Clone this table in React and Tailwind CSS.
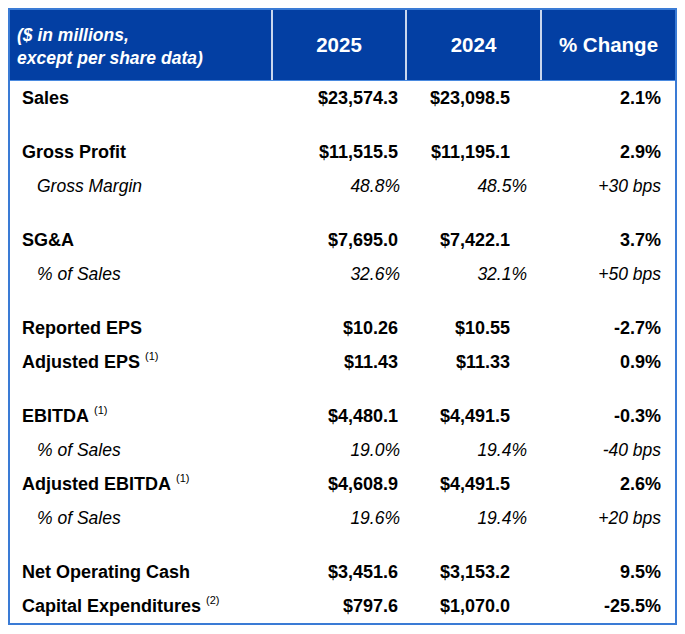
const rows = [
  { label: "Sales", a: "$23,574.3", b: "$23,098.5", c: "2.1%" },
  { spacer: true },
  { label: "Gross Profit", a: "$11,515.5", b: "$11,195.1", c: "2.9%" },
  { label: "Gross Margin", a: "48.8%", b: "48.5%", c: "+30 bps", sub: true },
  { spacer: true },
  { label: "SG&A", a: "$7,695.0", b: "$7,422.1", c: "3.7%" },
  { label: "% of Sales", a: "32.6%", b: "32.1%", c: "+50 bps", sub: true },
  { spacer: true },
  { label: "Reported EPS", a: "$10.26", b: "$10.55", c: "-2.7%" },
  { label: "Adjusted EPS", note: "(1)", a: "$11.43", b: "$11.33", c: "0.9%" },
  { spacer: true },
  { label: "EBITDA", note: "(1)", a: "$4,480.1", b: "$4,491.5", c: "-0.3%" },
  { label: "% of Sales", a: "19.0%", b: "19.4%", c: "-40 bps", sub: true },
  { label: "Adjusted EBITDA", note: "(1)", a: "$4,608.9", b: "$4,491.5", c: "2.6%" },
  { label: "% of Sales", a: "19.6%", b: "19.4%", c: "+20 bps", sub: true },
  { spacer: true },
  { label: "Net Operating Cash", a: "$3,451.6", b: "$3,153.2", c: "9.5%" },
  { label: "Capital Expenditures", note: "(2)", a: "$797.6", b: "$1,070.0", c: "-25.5%" },
];

const Row = ({ r }) => {
  if (r.spacer) return <div className="col-span-4 h-[20px]" />;
  const text = r.sub
    ? "italic font-normal text-[17.5px]"
    : "font-bold text-[18px]";
  return (
    <>
      <div className={`h-[34px] flex items-center ${r.sub ? "pl-[27px]" : "pl-[12px]"} ${text}`}>
        {r.label}
        {r.note && (
          <span className="not-italic font-normal text-[11px] relative -top-[6px] ml-[5px]">
            {r.note}
          </span>
        )}
      </div>
      <div className={`h-[34px] flex items-center justify-end ${r.sub ? "pr-[5px]" : "pr-[7px]"} ${text}`}>
        {r.a}
      </div>
      <div className={`h-[34px] flex items-center justify-end ${r.sub ? "pr-[13px]" : "pr-[30px]"} ${text}`}>
        {r.b}
      </div>
      <div className={`h-[34px] flex items-center justify-end pr-[14px] ${text}`}>
        {r.c}
      </div>
    </>
  );
};

export default function App() {
  return (
    <div className="bg-white w-[685px] h-[634px] pt-[8px] pl-[8px] font-['Liberation_Sans',Arial,sans-serif] text-black">
      <div className="w-[669px] border-2 border-[#3a7bd5]">
        <div className="grid grid-cols-[261px_134px_135px_135px] h-[71px] bg-[#033fa3] text-white border-b border-[#4a8ae0]">
          <div className="flex flex-col justify-center pl-[7px] pt-[4px] italic font-bold text-[17.5px] leading-[23px]">
            <span>($ in millions,</span>
            <span>except per share data)</span>
          </div>
          <div className="flex items-center justify-center border-l-2 border-[#c9d6ee] font-bold text-[20.5px]">
            2025
          </div>
          <div className="flex items-center justify-center border-l-2 border-[#c9d6ee] font-bold text-[20.5px]">
            2024
          </div>
          <div className="flex items-center justify-center border-l-2 border-[#c9d6ee] font-bold text-[20.5px]">
            % Change
          </div>
        </div>
        <div className="grid grid-cols-[261px_134px_135px_135px]">
          {rows.map((r, i) => (
            <Row key={i} r={r} />
          ))}
        </div>
      </div>
    </div>
  );
}
